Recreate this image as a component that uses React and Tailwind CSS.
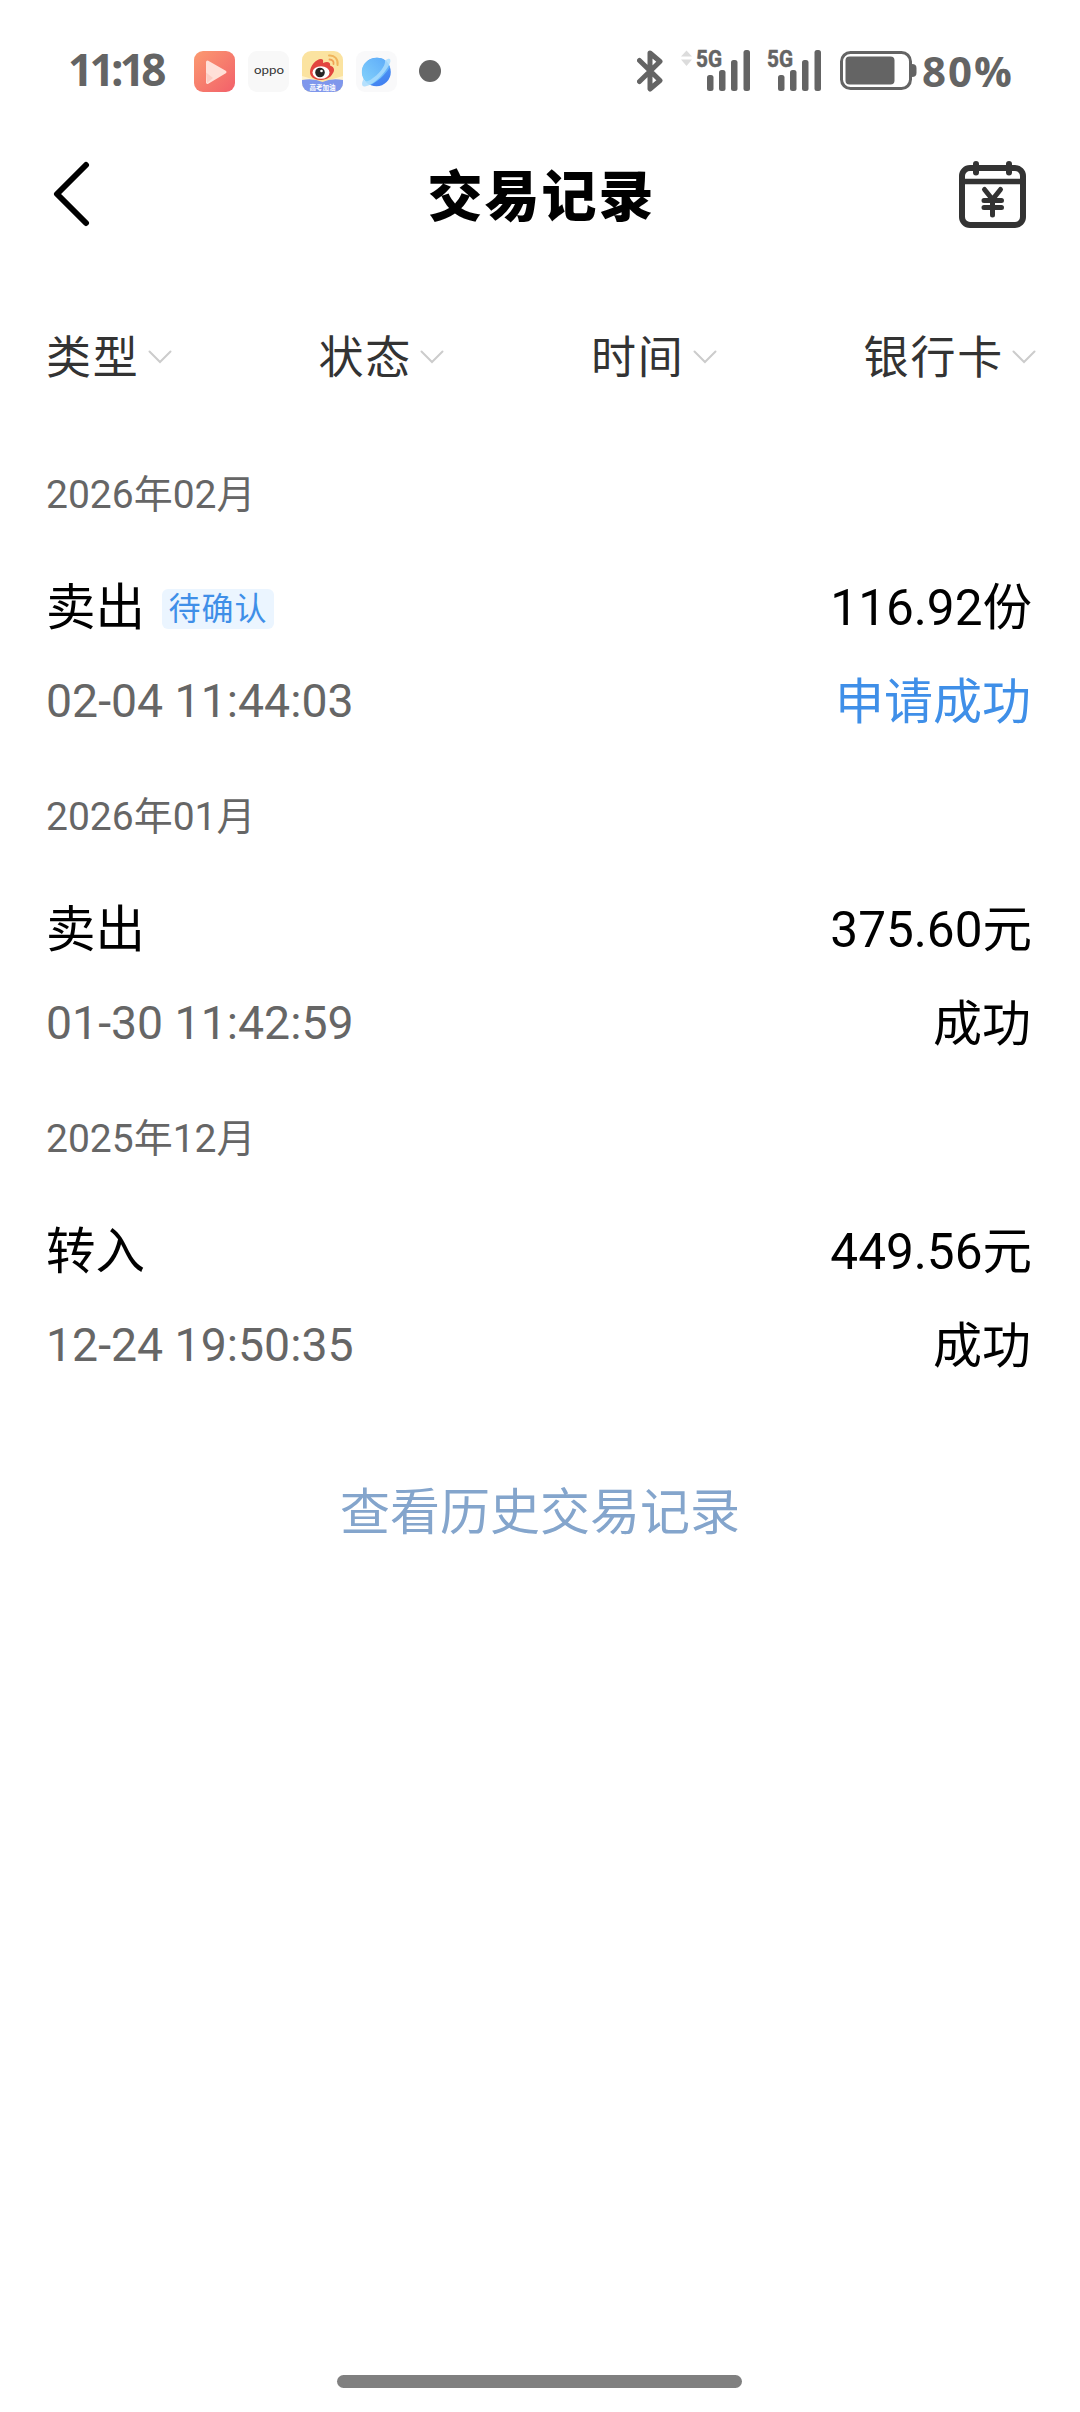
const monthGroups = [
    {
        month: '2026年02月',
        type: '卖出',
        tag: '待确认',
        amount: '116.92份',
        time: '02-04 11:44:03',
        status: '申请成功',
        pending: true
    },
    {
        month: '2026年01月',
        type: '卖出',
        amount: '375.60元',
        time: '01-30 11:42:59',
        status: '成功'
    },
    {
        month: '2025年12月',
        type: '转入',
        amount: '449.56元',
        time: '12-24 19:50:35',
        status: '成功'
    }
];

const filters = ['类型', '状态', '时间', '银行卡'];

const VideoIcon = () => (
    <svg className="w-[41px] h-[41px]" viewBox="0 0 41 41">
        <defs>
            <linearGradient id="video" x1="0" y1="0" x2="1" y2="1">
                <stop offset="0" stopColor="#fb9a70" />
                <stop offset="1" stopColor="#f2606a" />
            </linearGradient>
        </defs>
        <rect width="41" height="41" rx="9" fill="url(#video)" />
        <path d="M13.500 11 L31 21 L13.500 31.500 Z" fill="#ffe0d8" stroke="#ffe0d8" strokeWidth="3" strokeLinejoin="round" />
        <path d="M12 21.5 L19 27 L13 32 Z" fill="#fccdc3" />
    </svg>
);

const WeiboIcon = () => (
    <svg className="w-[41px] h-[41px]" viewBox="0 0 41 41">
        <defs>
            <clipPath id="weiboClip">
                <rect width="41" height="41" rx="9" />
            </clipPath>
        </defs>
        <g clipPath="url(#weiboClip)">
            <rect width="41" height="41" fill="#fbe3a0" />
            <path d="M0 25 L20.5 31 L41 25 V34 H0 Z" fill="#fff3cf" />
            <path d="M0 29 Q12 27 20.5 31 Q29 27 41 29 V41 H0 Z" fill="#7f97ec" />
            <path d="M8 21 C8 15 14 8 19 8 C22 8 21 11 21 12 C25 10 29 11 28 14.5 C33 16 32.500 20 31 22 C28 28 22 29 18 29 C12 28.500 8 26 8 21 Z" fill="#e2453f" />
            <ellipse cx="19" cy="21.500" rx="8.500" ry="6.300" fill="#fff" />
            <circle cx="18" cy="21.500" r="4.800" fill="#262626" />
            <circle cx="19.500" cy="20" r="1.300" fill="#fff" />
            <path d="M27 4.500 C32.500 4 36.500 8 35.500 14" fill="none" stroke="#f0b45c" strokeWidth="2" strokeLinecap="round" />
            <path d="M27.500 8.500 C30.500 8.500 32 10.500 31.500 13" fill="none" stroke="#f0a055" strokeWidth="1.800" strokeLinecap="round" />
            <text x="7.500" y="38.500" fontSize="6.500" fontWeight="700" fill="#fff" textLength="26" fontFamily="Noto Sans CJK SC, sans-serif">高考加油</text>
        </g>
    </svg>
);

const BrowserIcon = () => (
    <svg className="w-[41px] h-[41px]" viewBox="0 0 41 41">
        <defs>
            <linearGradient id="planet" x1="0.2" y1="0" x2="0.8" y2="1">
                <stop offset="0" stopColor="#5aa9f8" />
                <stop offset="1" stopColor="#3f7df0" />
            </linearGradient>
            <linearGradient id="planetTop" x1="1" y1="0" x2="0" y2="1">
                <stop offset="0" stopColor="#5aa8f9" />
                <stop offset="1" stopColor="#86d4fb" />
            </linearGradient>
        </defs>
        <rect width="41" height="41" rx="9" fill="#f9f9fa" />
        <circle cx="20.500" cy="21" r="14.300" fill="url(#planet)" />
        <path d="M34 16 C29 24 21 31 14 34 C4 29 3 15 12 9.500 C21 4 31 7 34 16 Z" fill="url(#planetTop)" />
        <path d="M29 9.500 C33 6.500 35.500 7 34 12 C31 20 18 34 9 35.500 C5 36 5.500 31 8 27.500 C8 31 11 31 15 28.500 C22 24 30 15 29 9.500 Z" fill="#a9dcfd" opacity="0.85" />
    </svg>
);

const Signal = ({ arrows }) => (
    <svg className="w-[70px] h-[64px]" viewBox="0 -10 70 64">
        {arrows && (
            <g fill="#dcdcdc">
                <path d="M0 7.500 L5.500 1.500 L11 7.500 Z" />
                <path d="M0 10.500 H11 L5.500 17 Z" />
            </g>
        )}
        <text x="15" y="18" fontSize="24" fontWeight="700" fill="#646464" stroke="#646464" strokeWidth="0.500" fontFamily="Roboto, sans-serif" textLength="26" lengthAdjust="spacingAndGlyphs">5G</text>
        <g fill="#646464">
            <rect x="26" y="26" width="6.500" height="16" rx="2.500" />
            <rect x="38" y="21" width="6.500" height="21" rx="2.500" />
            <rect x="50" y="11" width="6.500" height="31" rx="2.500" />
            <rect x="62.500" y="1" width="6.500" height="41" rx="2.500" />
        </g>
    </svg>
);

const StatusBar = () => (
    <div className="flex h-[142px] items-center pl-[68px] pr-[60px] text-[#646464]">
        <span className="w-[126px] pb-[4px] text-[44px] font-bold tracking-[-3.700px] leading-[60px] font-['Open_Sans',sans-serif]">11:18</span>
        <div className="flex items-center gap-[13px]">
            <VideoIcon />
            <div className="flex h-[41px] w-[41px] items-center justify-center rounded-[9px] bg-[#f8f8f8]">
                <svg className="h-[26px] w-[32px]" viewBox="0 0 32 26">
                    <text x="1" y="16" fontSize="12" fill="#333" fontFamily="Lato, sans-serif" textLength="30" lengthAdjust="spacingAndGlyphs">oppo</text>
                </svg>
            </div>
            <WeiboIcon />
            <BrowserIcon />
            <div className="ml-[9px] h-[22px] w-[22px] rounded-full bg-[#646464]"></div>
        </div>
        <div className="ml-auto flex items-center">
            <svg className="w-[26px] h-[44px] mr-[18px]" viewBox="0 0 26 44" fill="none" stroke="#646464" strokeWidth="5" strokeLinejoin="round" strokeLinecap="round">
                <path d="M2.500 11.500 L23 31.500 L13 40 V4 L23 12.500 L2.500 32.500" />
            </svg>
            <Signal arrows />
            <div className="w-px"></div>
            <Signal />
            <svg className="w-[77px] h-[40px] ml-[18px]" viewBox="0 0 77 40">
                <rect x="1.500" y="1.500" width="69" height="36" rx="9" fill="none" stroke="#646464" strokeWidth="3" />
                <rect x="5.500" y="5.500" width="49" height="28" rx="4" fill="#646464" />
                <path d="M72 13 C75 13 76.500 14.500 76.500 17 V22 C76.500 24.500 75 26 72 26 Z" fill="#646464" />
            </svg>
            <span className="ml-[5px] w-[98px] text-[42px] font-bold leading-[60px] tracking-[2px] font-['Open_Sans',sans-serif]">80%</span>
        </div>
    </div>
);

const Header = () => (
    <div className="flex h-[106px] items-center justify-between pl-[53px] pr-[54px]">
        <svg className="w-[38px] h-[68px]" viewBox="0 0 38 68" fill="none" stroke="#000" strokeWidth="6" strokeLinecap="round" strokeLinejoin="round">
            <path d="M33 4 L4 33 L33 62" />
        </svg>
        <h1 className="ml-[34px] pt-[4px] text-[55px] font-black leading-none tracking-[2px] text-black">交易记录</h1>
        <svg className="w-[68px] h-[70px]" viewBox="0 0 68 70" fill="none" stroke="#333" strokeWidth="6" strokeLinecap="round" strokeLinejoin="round">
            <rect x="4" y="8" width="61" height="57" rx="8" />
            <path d="M4 21.500 H65" strokeWidth="5.500" />
            <path d="M18 4 V12.500 M51 4 V12.500" />
            <path d="M26.500 29.500 L34.500 39.500 L42.500 29.500 M34.500 39.500 V55 M26 40.500 H43.500 M26 47.500 H43.500" strokeWidth="5" />
        </svg>
    </div>
);

const App = () => {
    return (
        <div className="flex h-[2412px] w-[1080px] flex-col overflow-hidden bg-white font-['Roboto','Noto_Sans_CJK_SC',sans-serif]">
            <StatusBar />
            <Header />

            <div className="flex h-[192px] items-start justify-between pl-[46px] pr-[44px] pt-[76px]">
                {filters.map((label) => (
                    <div key={label} className="flex h-[66px] items-center gap-[8px]">
                        <span className="pt-[3px] text-[45px] leading-none tracking-[1.800px] text-[#333]">{label}</span>
                        <svg className="w-[24px] h-[14px]" viewBox="0 0 24 14" fill="none" stroke="#ccc" strokeWidth="2" strokeLinecap="round">
                            <path d="M1.500 1.500 L12 12 L22.500 1.500" />
                        </svg>
                    </div>
                ))}
            </div>

            {monthGroups.map((item) => (
                <section key={item.month} className="h-[322px] pl-[46px] pr-[48px]">
                    <div className="flex h-[108px] items-center pt-[2px] text-[39px] leading-none text-[#666]">{item.month}</div>
                    <div className="flex h-[118px] items-center justify-between pt-[4px] text-[49.500px] leading-none text-black">
                        <div className="flex items-center">
                            <span>{item.type}</span>
                            {item.tag && (
                                <span className="ml-[17px] flex h-[40px] w-[112px] items-center justify-center rounded-[6px] bg-[#ebf5ff] text-[32px] tracking-[1px] text-[#3f8fe8]">
                                    {item.tag}
                                </span>
                            )}
                        </div>
                        <span>{item.amount}</span>
                    </div>
                    <div className="flex h-[68px] items-center justify-between leading-none">
                        <span className="pt-[2px] text-[46.400px] text-[#666]">{item.time}</span>
                        <span className={`pr-px pt-[4px] text-[49px] ${item.pending ? 'text-[#3f8fe8]' : 'text-black'}`}>{item.status}</span>
                    </div>
                </section>
            ))}

            <a className="mt-[76px] text-center text-[50px] leading-[62px] text-[#84a5cc]">查看历史交易记录</a>

            <div className="ml-[337px] mt-auto mb-[24px] h-[13px] w-[405px] shrink-0 rounded-full bg-[#808080]"></div>
        </div>
    );
};

export default App;
